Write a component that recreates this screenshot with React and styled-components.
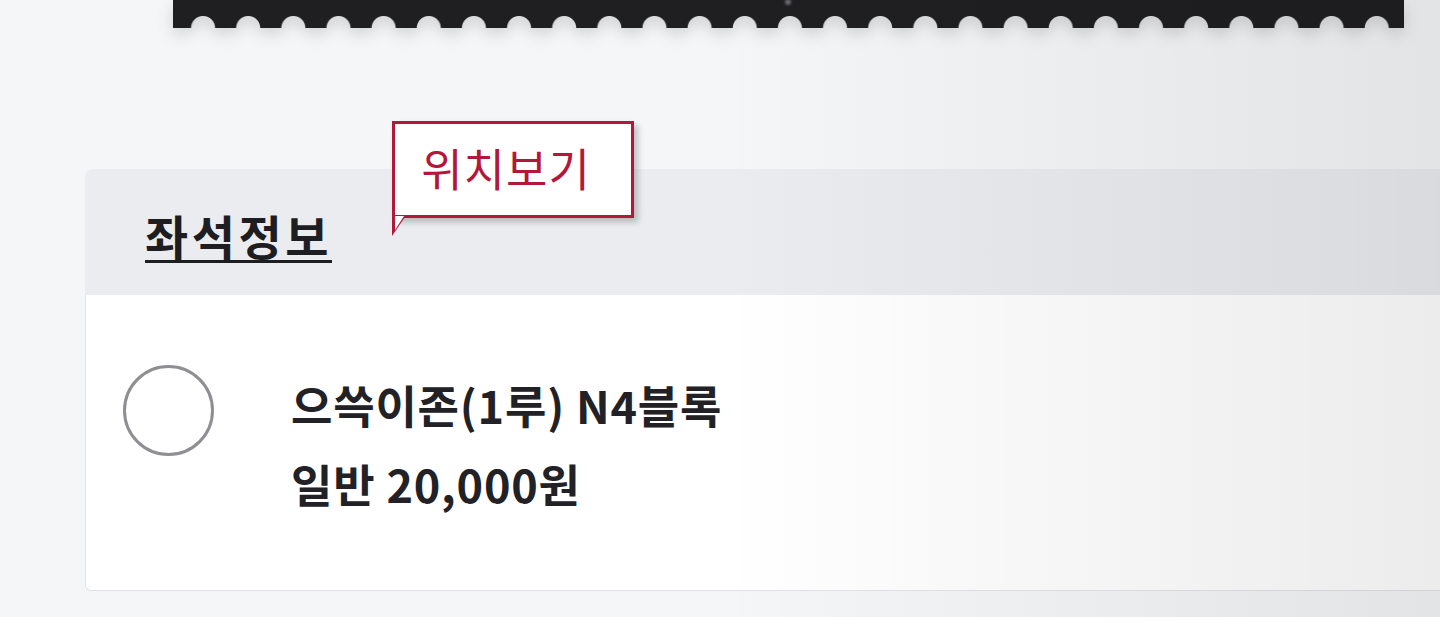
import styled, { createGlobalStyle } from 'styled-components';

const GlobalStyle = createGlobalStyle`
  html, body {
    margin: 0;
    padding: 0;
    overflow: hidden;
    background: #f5f6f7;
  }

  body {
    font-family: "Noto Sans CJK KR", "Noto Sans", sans-serif;
    color: #222226;
  }
`;

const Page = styled.div`
  position: relative;
  height: 617px;
  overflow: hidden;
`;

const TicketShadow = styled.div`
  margin-left: 173px;
  width: 1231px;
  filter: drop-shadow(0 6px 8px rgba(0, 0, 0, 0.14));
`;

const TicketEdge = styled.div`
  position: relative;
  height: 28px;
  background: #1f1f22;
  -webkit-mask-image: radial-gradient(circle at 50% 100%, transparent 11.5px, #000 12.5px);
  mask-image: radial-gradient(circle at 50% 100%, transparent 11.5px, #000 12.5px);
  -webkit-mask-size: 45.15px 28px;
  mask-size: 45.15px 28px;
  -webkit-mask-position: 7.5px 0;
  mask-position: 7.5px 0;
  -webkit-mask-repeat: repeat-x;
  mask-repeat: repeat-x;
`;

const Notch = styled.span`
  position: absolute;
  left: 612px;
  top: -1px;
  width: 6px;
  height: 6px;
  border-radius: 50%;
  background: #6a6a6e;
  filter: blur(1px);
`;

const Section = styled.section`
  margin: 141px -40px 0 85px;
`;

const SeatHeader = styled.div`
  position: relative;
  display: flex;
  align-items: center;
  height: 126px;
  padding-left: 60px;
  background: #ebecef;
  border-radius: 8px 0 0 0;
`;

const Title = styled.h2`
  margin: 0;
  padding-top: 4px;
  font-size: 47px;
  font-weight: 700;
  letter-spacing: 3.5px;
  line-height: 1;
  color: #1e1e22;
  text-decoration: underline;
  text-decoration-thickness: 3px;
  text-underline-offset: 5px;
`;

const LocationTip = styled.button`
  position: absolute;
  left: 307px;
  top: -48px;
  box-sizing: border-box;
  width: 242px;
  height: 97px;
  padding: 0 14px 4px 0;
  display: flex;
  align-items: center;
  justify-content: center;
  border: 3px solid #b3173a;
  background: #fff;
  box-shadow: 4px 4px 6px rgba(0, 0, 0, 0.22);
  font-family: inherit;
  font-size: 45px;
  font-weight: 400;
  letter-spacing: 1px;
  color: #b3173a;

  &::before {
    content: '';
    position: absolute;
    left: -3px;
    bottom: -21px;
    border-top: 19px solid #b3173a;
    border-right: 13px solid transparent;
  }

  &::after {
    content: '';
    position: absolute;
    left: 0;
    bottom: -15px;
    border-top: 14px solid #fff;
    border-right: 9px solid transparent;
  }
`;

const SeatBody = styled.div`
  display: flex;
  align-items: flex-start;
  box-sizing: border-box;
  height: 296px;
  padding: 70px 0 0 37px;
  background: #fff;
  border: 1px solid #e1e2e5;
  border-top: none;
  border-radius: 0 0 0 6px;
`;

const Radio = styled.span`
  flex: none;
  box-sizing: border-box;
  width: 91px;
  height: 91px;
  border: 3px solid #8f8f93;
  border-radius: 50%;
`;

const SeatInfo = styled.div`
  margin-left: 77px;
  font-size: 45px;
  font-weight: 700;
  line-height: 79px;
  letter-spacing: 0.8px;
  color: #222226;
`;

const Vignette = styled.div`
  position: absolute;
  inset: 0;
  pointer-events: none;
  background: linear-gradient(to right, rgba(0, 0, 0, 0) 50%, rgba(0, 0, 0, 0.075) 100%);
`;

export default function App() {
  return (
    <>
      <GlobalStyle />
      <Page>
        <TicketShadow>
          <TicketEdge>
            <Notch />
          </TicketEdge>
        </TicketShadow>

        <Section>
          <SeatHeader>
            <Title>좌석정보</Title>
            <LocationTip type="button">위치보기</LocationTip>
          </SeatHeader>

          <SeatBody>
            <Radio />
            <SeatInfo>
              <div>으쓱이존(1루) N4블록</div>
              <div>일반 20,000원</div>
            </SeatInfo>
          </SeatBody>
        </Section>

        <Vignette />
      </Page>
    </>
  );
}
